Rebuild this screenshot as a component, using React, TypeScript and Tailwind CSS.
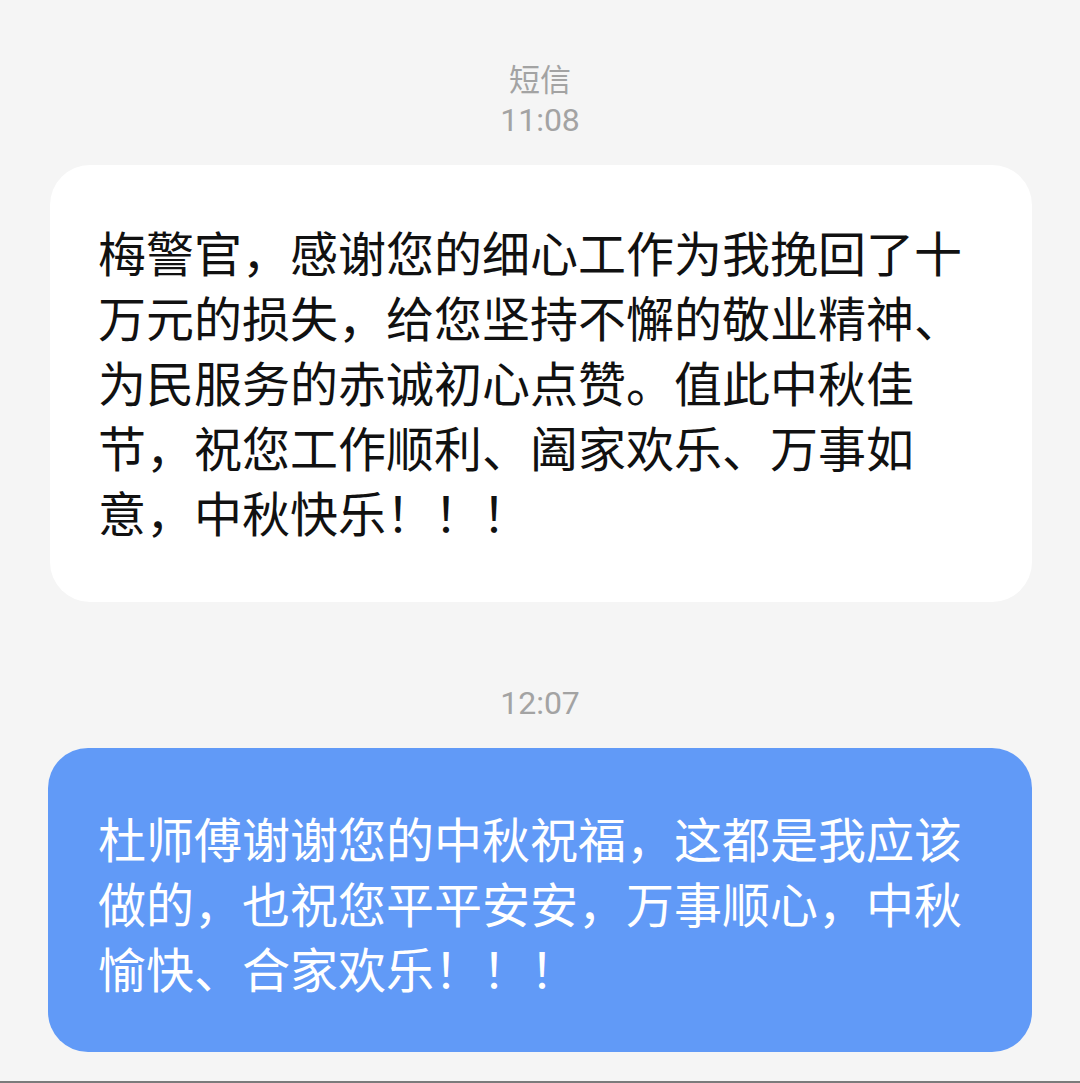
import React from "react";

const whiteLines = [
  "梅警官，感谢您的细心工作为我挽回了十",
  "万元的损失，给您坚持不懈的敬业精神、",
  "为民服务的赤诚初心点赞。值此中秋佳",
  "节，祝您工作顺利、阖家欢乐、万事如",
  "意，中秋快乐！！！",
];

const blueLines = [
  "杜师傅谢谢您的中秋祝福，这都是我应该",
  "做的，也祝您平平安安，万事顺心，中秋",
  "愉快、合家欢乐！！！",
];

export default function App() {
  return (
    <div className="w-[1080px] h-[1083px] bg-[#f5f5f5] flex flex-col border-b-2 border-[#7b7b7b] overflow-hidden font-['Noto_Sans_CJK_SC','Noto_Sans',sans-serif]">
      <div className="pt-[57px] flex flex-col items-center text-[#a3a3a3]">
        <div className="text-[31px] leading-[42px]">短信</div>
        <div className="text-[32px] leading-[42px] font-['Roboto','Noto_Sans_CJK_SC',sans-serif]">11:08</div>
      </div>
      <div className="mt-[24px] ml-[50px] mr-[48px] bg-white rounded-[40px] pl-[48px] pr-[20px] pt-[54px] pb-[58px] text-[#111111] text-[48px] leading-[65px]">
        {whiteLines.map((l, i) => (
          <div key={i} className="whitespace-nowrap">{l}</div>
        ))}
      </div>
      <div className="mt-[80px] flex justify-center text-[#a3a3a3] text-[32px] leading-[42px] font-['Roboto','Noto_Sans_CJK_SC',sans-serif]">12:07</div>
      <div className="mt-[24px] ml-[48px] mr-[48px] bg-[#619af7] rounded-[40px] pl-[50px] pr-[20px] pt-[57px] pb-[52px] text-white text-[48px] leading-[65px]">
        {blueLines.map((l, i) => (
          <div key={i} className="whitespace-nowrap">{l}</div>
        ))}
      </div>
    </div>
  );
}
